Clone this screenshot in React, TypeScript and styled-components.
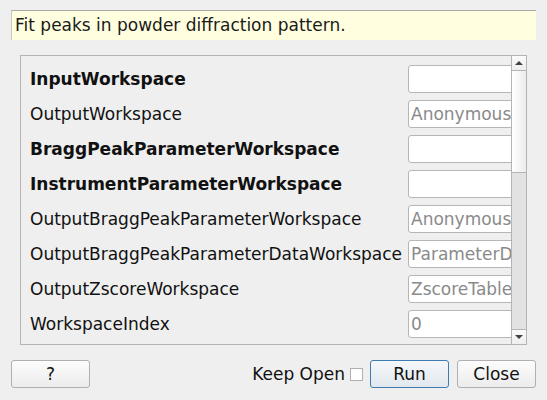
import React from 'react'
import styled, { createGlobalStyle } from 'styled-components'

const GlobalStyle = createGlobalStyle`
  html, body {
    margin: 0;
    padding: 0;
    background: #efefef;
  }
  * {
    box-sizing: border-box;
  }
`

const Dialog = styled.div`
  width: 547px;
  height: 400px;
  padding: 10px 11px 0 11px;
  display: flex;
  flex-direction: column;
  font-family: 'DejaVu Sans', 'Liberation Sans', sans-serif;
  font-size: 17px;
  color: #1a1a1a;
`

const Description = styled.div`
  height: 30px;
  background: #ffffe0;
  border-top: 1px solid #a8a8a8;
  border-left: 1px solid #c8c8c8;
  padding: 2px 0 0 3px;
  line-height: 24px;
`

const Frame = styled.div`
  margin: 15px 9px 0 9px;
  height: 290px;
  border: 1px solid #b4b4b4;
  display: flex;
  overflow: hidden;
`

const Viewport = styled.div`
  flex: 1;
  overflow: hidden;
  padding: 9px 0 0 9px;
  display: grid;
  grid-template-columns: 372px 160px;
  grid-auto-rows: 28px;
  column-gap: 6px;
  row-gap: 7px;
  align-items: center;
`

const Label = styled.span<{ $required?: boolean }>`
  font-weight: ${p => (p.$required ? 'bold' : 'normal')};
  white-space: nowrap;
  color: #111;
`

const Field = styled.div`
  height: 28px;
  border: 1px solid #b6b6b6;
  border-radius: 3px;
  background: #fff;
  color: #8a8a8a;
  padding: 0 0 0 2px;
  line-height: 26px;
  white-space: nowrap;
  overflow: hidden;
`

const ScrollBar = styled.div`
  width: 15px;
  flex-shrink: 0;
  border-left: 1px solid #b4b4b4;
  display: flex;
  flex-direction: column;
  background: #e2e2e2;
`

const ArrowButton = styled.div<{ $down?: boolean }>`
  height: 15px;
  background: linear-gradient(#fafafa, #eeeeee);
  border-${p => (p.$down ? 'top' : 'bottom')}: 1px solid #b4b4b4;
  display: flex;
  align-items: center;
  justify-content: center;
  &::after {
    content: '';
    border-left: 4px solid transparent;
    border-right: 4px solid transparent;
    ${p =>
      p.$down ? 'border-top: 4px solid #404040;' : 'border-bottom: 4px solid #404040;'}
  }
`

const Thumb = styled.div`
  height: 102px;
  background: linear-gradient(90deg, #ffffff, #ececec);
  border-bottom: 1px solid #b4b4b4;
`

const Track = styled.div`
  flex: 1;
`

const ButtonBar = styled.div`
  margin-top: 15px;
  display: flex;
  align-items: center;
  height: 28px;
`

const Button = styled.button<{ $primary?: boolean }>`
  width: 79px;
  height: 28px;
  flex-shrink: 0;
  font-family: inherit;
  font-size: 17px;
  color: #111;
  border-radius: 3px;
  border: 1px solid ${p => (p.$primary ? '#3d7bb0' : '#b0b0b0')};
  background: ${p =>
    p.$primary
      ? 'linear-gradient(#f4f7fa, #e2e8ee)'
      : 'linear-gradient(#fcfcfc, #ececec)'};
  padding: 0;
  margin-left: ${p => (p.$primary ? '7px' : '0')};
`

const Spacer = styled.div`
  flex: 1;
`

const KeepOpen = styled.label`
  display: flex;
  align-items: center;
  gap: 5px;
  color: #111;
`

const CheckBox = styled.span`
  width: 13px;
  height: 13px;
  border: 1px solid #b0b0b0;
  background: #fff;
`

const CloseButton = styled(Button)`
  margin-left: 8px;
`

const properties = [
  { name: 'InputWorkspace', required: true, value: '' },
  { name: 'OutputWorkspace', required: false, value: 'Anonymous' },
  { name: 'BraggPeakParameterWorkspace', required: true, value: '' },
  { name: 'InstrumentParameterWorkspace', required: true, value: '' },
  { name: 'OutputBraggPeakParameterWorkspace', required: false, value: 'Anonymous' },
  { name: 'OutputBraggPeakParameterDataWorkspace', required: false, value: 'ParameterData' },
  { name: 'OutputZscoreWorkspace', required: false, value: 'ZscoreTable' },
  { name: 'WorkspaceIndex', required: false, value: '0' },
]

export default function App() {
  return (
    <>
      <GlobalStyle />
      <Dialog>
        <Description>Fit peaks in powder diffraction pattern.</Description>
        <Frame>
          <Viewport>
            {properties.map(prop => (
              <React.Fragment key={prop.name}>
                <Label $required={prop.required}>{prop.name}</Label>
                <Field>{prop.value}</Field>
              </React.Fragment>
            ))}
          </Viewport>
          <ScrollBar>
            <ArrowButton />
            <Thumb />
            <Track />
            <ArrowButton $down />
          </ScrollBar>
        </Frame>
        <ButtonBar>
          <Button>?</Button>
          <Spacer />
          <KeepOpen>
            Keep Open
            <CheckBox />
          </KeepOpen>
          <Button $primary>Run</Button>
          <CloseButton>Close</CloseButton>
        </ButtonBar>
      </Dialog>
    </>
  )
}
